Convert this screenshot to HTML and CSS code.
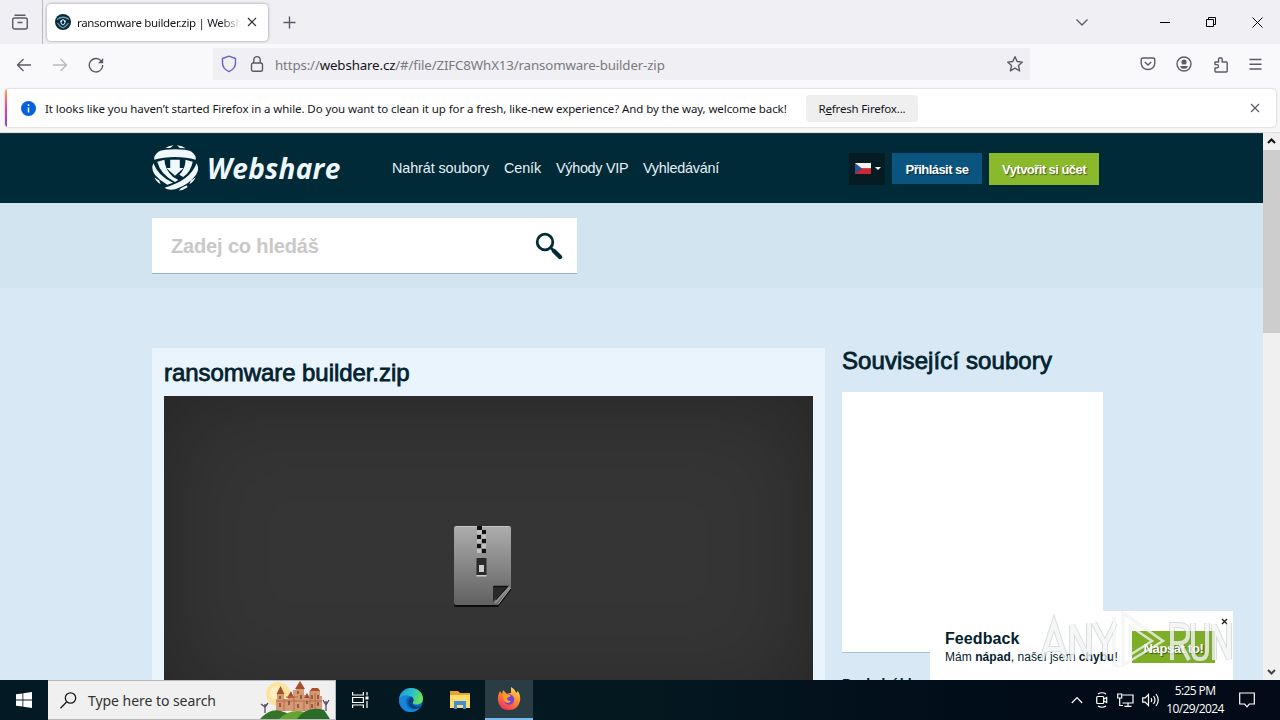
FILE: index.html
```html
<!DOCTYPE html>
<html lang="cs">
<head>
<meta charset="utf-8">
<title>ransomware builder.zip | Webshare</title>
<link rel="stylesheet" href="styles.css">
</head>
<body>
<div class="tabs">
  <div class="tabs-view"><svg width="18" height="18" viewBox="0 0 18 18" class="line"><rect x="1.7" y="5" width="14.6" height="11" rx="2"/><path d="M3.5 2.2h11M6.5 9.5h5"/></svg></div>
  <div class="tab">
    <svg class="favicon" width="16" height="16" viewBox="0 0 16 16"><circle cx="8" cy="8" r="8" fill="#0b2b3a"/><path d="M2 5.500Q8 1 14 5.500M2.500 9Q5 13 8.500 14M13.500 9Q12 12 8 14" fill="none" stroke="#6d9db5" stroke-width="1.300"/><path d="M8 5l3 2-1 3-2 1.500L6 10 5 7z" fill="#d5e9f3"/><path d="M7 6.500h2v2h1L8 10.500l-2-2h1z" fill="#0b2b3a"/></svg>
    <span class="tab-title">ransomware builder.zip | Webshare</span>
    <svg width="10" height="10" viewBox="0 0 10 10" class="line dark"><path d="M1 1l8 8M9 1l-8 8"/></svg>
  </div>
  <svg class="plus line" width="13" height="13" viewBox="0 0 13 13"><path d="M6.500.5v12M.5 6.500h12"/></svg>
  <div class="window-buttons">
    <svg class="line chevron" width="14" height="9" viewBox="0 0 14 9"><path d="M1.500 1.500L7 7l5.500-5.500"/></svg>
    <svg class="black" width="11" height="11" viewBox="0 0 11 11"><path d="M0 5.500h10"/></svg>
    <svg class="black" width="11" height="11" viewBox="0 0 11 11"><path d="M.5 2.500h7v7h-7zM2.500 2.500V.500h7v7h-2"/></svg>
    <svg class="black" width="11" height="11" viewBox="0 0 11 11"><path d="M.5.500l10 10M10.500.500l-10 10"/></svg>
  </div>
</div>
<div class="navbar">
  <div class="nav-buttons">
    <svg class="line" width="16" height="16" viewBox="0 0 16 16"><path d="M15 8H1.500M7.500 2l-6 6 6 6"/></svg>
    <svg class="line faded" width="16" height="16" viewBox="0 0 16 16"><path d="M1 8h13.500M8.500 2l6 6-6 6"/></svg>
    <svg class="line" width="16" height="16" viewBox="0 0 16 16"><path d="M13.300 4.100A6.700 6.700 0 1 0 14.700 8"/><path d="M15.200 1v5.200H10z" fill="#5b5b66" stroke="none"/></svg>
  </div>
  <div class="urlbar">
    <svg width="16" height="18" viewBox="0 0 16 18" class="line shield"><path d="M8 1.200l6.500 2.300v4.500c0 4-3 7-6.500 8.600C4.500 15 1.500 12 1.500 8V3.500z"/></svg>
    <svg width="14" height="18" viewBox="0 0 14 18" class="line"><rect x="1.500" y="8" width="11" height="8.200" rx="1.800"/><path d="M3.800 8V4.800a3.200 3.200 0 0 1 6.400 0V8"/></svg>
    <span class="url">https://<b>webshare.cz</b>/#/file/ZIFC8WhX13/ransomware-builder-zip</span>
    <svg class="line star" width="18" height="18" viewBox="0 0 18 18"><path d="M9 1.700l2.200 4.800 5.200.6-3.900 3.500 1.100 5.200L9 13.200l-4.600 2.600 1.100-5.200L1.600 7.100l5.200-.6z"/></svg>
  </div>
  <div class="nav-tools">
    <svg class="line" width="16" height="16" viewBox="0 0 16 16"><path d="M3 2h10a1.800 1.800 0 0 1 1.800 1.800v3.400a6.800 6.300 0 0 1-13.600 0V3.800A1.800 1.800 0 0 1 3 2zM4.800 6L8 9l3.200-3"/></svg>
    <svg class="line" width="16" height="16" viewBox="0 0 16 16"><circle cx="8" cy="8" r="7"/><circle cx="8" cy="6" r="2.600" class="solid"/><path d="M4.200 9.900h7.600c0 1.800-1.500 2.900-3.800 2.900s-3.800-1.100-3.800-2.900z" class="solid"/></svg>
    <svg class="line" width="16" height="17" viewBox="0 0 16 17"><path d="M2 6h3.600V3.600a1.800 1.800 0 0 1 3.600 0V6h4a1 1 0 0 1 1 1v8a1 1 0 0 1-1 1H3a1 1 0 0 1-1-1v-3h1.800a1.700 1.700 0 0 0 0-3.400H2z"/></svg>
    <svg class="line" width="13" height="13" viewBox="0 0 13 13"><path d="M.5 1.500h12M.5 6.200h12M.5 11h12"/></svg>
  </div>
</div>
<div class="notice-row">
  <div class="notice">
    <svg width="15" height="15" viewBox="0 0 15 15"><circle cx="7.500" cy="7.500" r="7.500" fill="#0561e0"/><path d="M7.500 3.300v1.800M7.500 6.500v5" stroke="#fff" stroke-width="1.500"/></svg>
    <span class="notice-text">It looks like you haven’t started Firefox in a while. Do you want to clean it up for a fresh, like-new experience? And by the way, welcome back!</span>
    <span class="refresh"><span class="refresh-text">R<u>e</u>fresh Firefox...</span></span>
    <svg class="line notice-close" width="10" height="10" viewBox="0 0 10 10"><path d="M1 1l8 8M9 1l-8 8"/></svg>
  </div>
</div>
<div class="viewport">
  <div class="page">
    <header class="site-header">
      <svg class="logo" width="46" height="46" viewBox="0 0 48 48">
        <path d="M14 3Q17 1 22.500.300L19 3zM26 .300Q32 1 35 3.500L29 3z"/>
        <path d="M2.500 15.500Q1.500 12 5 8.500Q8 5.500 14 5Q24 4 34 5Q40 5.500 43 8.500Q46.500 12 45.500 15.500Q36 12.500 24 12.500Q12 12.500 2.500 15.500z"/>
        <path d="M5.500 17.500L13 15.500Q13 25 22 33.500L27.500 36.500l-3.500 2Q9 31 5.500 17.500zM42.500 17.500L35 15.500Q35 25 28.500 31l4 2.500Q40.500 28 42.500 17.500z"/>
        <path d="M1.500 19Q-1.500 25 3 31Q8 37 16 41.500l6-2Q6 32 1.500 19zM46.500 19Q50 25 46 31Q39 41 25 46Q17 48 13 44.500Q40 37 46.500 19z"/>
        <path d="M2.500 34l5 3 1.500 4Q4 38 2.500 34zM45.500 34l-5 3-1.500 4Q44 38 45.500 34zM30 45l6.500-3 .5 2Q33 47 28 47.500z"/>
        <path d="M19 15.500h10v8.500h4L24 32l-9-8h4z"/></svg>
      <span class="brand">Webshare</span>
      <nav class="menu"><span class="m1">Nahrát soubory</span><span class="m2">Ceník</span><span class="m3">Výhody VIP</span><span class="m4">Vyhledávání</span></nav>
      <div class="account">
        <span class="lang"><svg width="16" height="11" viewBox="0 0 16 11"><path fill="#f4f4f4" d="M0 0h16v5.500H0z"/><path fill="#d22534" d="M0 5.500h16V11H0z"/><path fill="#27568f" d="M0 0l7 5.500L0 11z"/></svg><svg width="6" height="3" viewBox="0 0 6 3"><path fill="#fff" d="M0 0h6L3 3z"/></svg></span>
        <span class="button login">Přihlásit se</span>
        <span class="button signup">Vytvořit si účet</span>
      </div>
    </header>
    <div class="search-band">
      <div class="search"><span class="placeholder">Zadej co hledáš</span>
        <svg width="28" height="28" viewBox="0 0 28 28"><circle cx="10" cy="10" r="7.800" fill="none" stroke="#022b37" stroke-width="2.800"/><path d="M15.500 15.500l3 3" stroke="#022b37" stroke-width="2.600"/><path d="M19 19l6 6" stroke="#022b37" stroke-width="4.400" stroke-linecap="round"/></svg>
      </div>
    </div>
    <div class="columns">
      <main class="file">
        <h1>ransomware builder.zip</h1>
        <div class="preview">
          <svg width="60" height="84" viewBox="0 0 60 84"><defs><linearGradient id="sheet" x1="0" y1="0" x2="0" y2="1"><stop offset="0" stop-color="#adadad"/><stop offset="1" stop-color="#606060"/></linearGradient></defs>
            <path d="M3 3h53q2 0 2 2v60L45 82H3q-2 0-2-2V5q0-2 2-2z" fill="#0b0b0b"/>
            <path d="M3 1h53q2 0 2 2v60L45 80H3q-2 0-2-2V3q0-2 2-2z" fill="url(#sheet)"/>
            <path d="M3 1.500h53" stroke="#c8c8c8"/><path d="M57.500 63L45 79.500" stroke="#aaa"/>
            <path d="M24 1h5v4h-5zM29 5h4v4h-4zM24 10h4v4h-4zM29 14h4v4h-4zM24 19h4v4h-4zM29 24h4v4h-4z" fill="#111"/>
            <path d="M24 5h5v4h-5zM29 9.500h4v4h-4zM24 14h4v4h-4zM29 19h4v4h-4zM24 24h4v4h-4z" fill="#c0c0c0"/>
            <path d="M23.500 33h10v17h-10z" fill="#2a2a2a"/><path d="M26 40h5v7h-5zM23.500 50h10v1.500h-10z" fill="#ccc"/>
            <path d="M40 77V61h14z" fill="#292929"/><path d="M40.500 61.500h14L43 75" fill="none" stroke="#111" stroke-width="1.500"/><path d="M56.500 62L42 78" stroke="#8e8e8e" stroke-width="2"/></svg>
        </div>
      </main>
      <aside class="related"><h2>Související soubory</h2><div class="related-box"></div><h3>Poslední hl</h3></aside>
    </div>
    <div class="feedback">
      <div><div class="feedback-title">Feedback</div><div class="feedback-text">Mám <b>nápad</b>, našel jsem <b>chybu</b>!</div></div>
      <span class="button write">Napsat to!</span>
      <svg class="feedback-close" width="7" height="7" viewBox="0 0 7 7"><path d="M1 1l5 5M6 1L1 6" stroke="#222" stroke-width="1.400"/></svg>
    </div>
    <svg class="watermark" width="198" height="66" viewBox="0 0 198 66">
      <defs><g id="mark"><path d="M5 52L17 15l12 37M9 41h16M35 52V17l17 34V15M57 15l11 21v16M68 36l10-21M135 52V17h7q9 0 9 9t-9 9h-7m8 0l9 17M156 15v28q0 8 7 8t7-8V15M177 52V17l15 34V15"/><path d="M77 9v47l5 3M86 5v52l40-24zM93 18v29l22-14z" stroke-width="2.500"/></g></defs>
      <use href="#mark" fill="none" stroke="#7e868b" stroke-opacity=".28" stroke-width="6"/>
      <use href="#mark" fill="none" stroke="#fff" stroke-opacity=".72" stroke-width="4"/>
    </svg>
  </div>
  <div class="scrollbar">
    <svg width="9" height="6" viewBox="0 0 9 6"><path d="M1 5l3.500-3.500L8 5" fill="none" stroke="#111" stroke-width="2"/></svg>
    <div class="thumb"></div>
    <svg class="down" width="9" height="6" viewBox="0 0 9 6"><path d="M1 1l3.500 3.500L8 1" fill="none" stroke="#444" stroke-width="2"/></svg>
  </div>
</div>
<div class="taskbar">
  <div class="start"><svg width="16" height="16" viewBox="0 0 16 16" fill="#fff"><path d="M0 2.300l6.500-.9v6.100H0zM7.300 1.300L16 0v7.500H7.300zM0 8.400h6.500v6.200L0 13.700zM7.300 8.400H16V16l-8.700-1.300z"/></svg></div>
  <div class="win-search">
    <svg width="17" height="17" viewBox="0 0 17 17" fill="none" stroke="#1b1b1b" stroke-width="1.300"><circle cx="10.500" cy="6" r="5.200"/><path d="M6.800 9.800L.5 16.300"/></svg>
    <span class="win-search-text">Type here to search</span>
    <svg class="castle" width="74" height="38" viewBox="0 0 74 38">
      <circle cx="18" cy="13" r="12" fill="#fbe3a0"/><circle cx="17" cy="12" r="7" fill="#fff0bd"/>
      <path d="M16 30V18h1v-5h7v5h4v-3h5V9h3V7h8v7h3v3h3V9h10v6h2v15z" fill="#d79a77"/>
      <path d="M16.500 13l4-8 4 8zM35 8l5-8 5 8zM50 10l2-3h6l2 3zM27 17l4-7 3 7zM44 17l3-5 3 5z" fill="#a94d2b"/>
      <path d="M16 20h46M26 16h12M44 20v10M34 15v15M24 18v12M50 10v20M55 12v18" stroke="#b76a49"/>
      <path d="M20 15v3M20 22v4M29 20v4M38 10v3M41 14v4M38 23v4M47 20v3M52 14v4M52 23v4M58 14v4M58 21v4" stroke="#713a2b" stroke-width="1.300"/>
      <path d="M0 38Q10 27 21 30t16 8z" fill="#34752a"/><path d="M19 38q11-11 26-7t22 7z" fill="#65a330"/><path d="M37 38q10-14 27-9l6 9z" fill="#2b6c28"/><path d="M5 32V23M1 23l4 3 3-4M66 30V20M63 19l3 5 3-5" stroke="#574767" fill="none" stroke-width="1.300"/></svg>
  </div>
  <div class="task"><svg width="18" height="16" viewBox="0 0 18 16" fill="none" stroke="#fff" stroke-width="1.200"><path d="M.6 0v3h10.800V0M.6 16v-3h10.800v3M.6 5.500h10.800v5H.6zM15 0v3.500M15 9v7"/><path d="M13.500 4.500h3v3h-3z" fill="#fff" stroke="none"/></svg></div>
  <div class="task edge"><svg width="24" height="24" viewBox="0 0 24 24"><defs><linearGradient id="eg" x1="0" y1="0" x2="1" y2=".3"><stop offset="0" stop-color="#1c8fd8"/><stop offset=".6" stop-color="#2bc3c6"/><stop offset="1" stop-color="#67e05c"/></linearGradient></defs><circle cx="12" cy="12" r="12" fill="#0c63b5"/><path d="M0 11C1 4 6 0 12 0c7 0 12 5 12 10.500 0 4-3 6-6.500 6-3 0-4.500-1-3.500-2.500 2-3-.5-6-4-6-5 0-8.500 2-10 3z" fill="url(#eg)"/><path d="M0 11c3-4 8-4.500 11-2.500-4 1-5 5-3 9 2 4 7 5 13 2-4 5-10 5-13 4C3 22-.5 17 0 11z" fill="#1685d8"/><path d="M14 14c1-2 0-4-1-5-5 2-5 8 0 11 3 1.500 7 .5 9.500-1.500C18 20 12 18 14 14z" fill="#07417e"/></svg></div>
  <div class="task explorer"><svg width="22" height="19" viewBox="0 0 22 19"><path d="M1 0h8l2 2h10v15H1z" fill="#e8a32a"/><path d="M1 4h20v13H1z" fill="#fddb6d"/><path d="M5 18v-8h12v8h-3v-4H8v4z" fill="#3b91d7"/></svg></div>
  <div class="task active"><svg width="24" height="24" viewBox="0 0 24 24"><defs><linearGradient id="ff" x1=".8" y1="0" x2=".2" y2="1"><stop offset="0" stop-color="#ffe04a"/><stop offset=".5" stop-color="#ff822e"/><stop offset="1" stop-color="#f22a65"/></linearGradient></defs><path d="M3 4l2 3 1-4 4 4q2-1 4-1V0q4 2 5 6l2-2q3 5 2 10-2 9-11 9Q2 23 .8 13 .5 8 3 4z" fill="url(#ff)"/><circle cx="12" cy="12.500" r="5.200" fill="#7542d8"/><path d="M5 8q5-2 9 1l-4 2q0 3 4 3-3 4-7 0z" fill="#ff9a2d"/></svg></div>
  <div class="tray">
    <svg width="12" height="8" viewBox="0 0 12 8"><path d="M.8 7L6 1.500 11.200 7"/></svg>
    <svg width="12" height="16" viewBox="0 0 12 16"><rect x=".7" y="4.500" width="7" height="7" rx="1"/><path d="M7.700 7l3-1.500v5l-3-1.500M2 2q4-2.500 8 0M2 14q4 2.500 8 0"/></svg>
    <svg width="17" height="14" viewBox="0 0 17 14"><path d="M5.500 2H16v8H5.500M.7 1h4v4h-4zM2.700 5v7.500H6M11 10v3M7.500 13.300h7"/></svg>
    <svg width="17" height="14" viewBox="0 0 17 14"><path d="M.7 4.800h2.500L6.500 1.500v11L3.200 9.200H.7zM9 5q1.500 2 0 4M11.500 3q3 4 0 8M14 1q4.500 6 0 12"/></svg>
    <div class="clock"><span class="time">5:25 PM</span><span class="date">10/29/2024</span></div>
    <svg class="action" width="16" height="16" viewBox="0 0 16 16"><path d="M.7 1h14.600v11h-5L8 14.800 5.700 12h-5z"/></svg>
  </div>
</div>
</body>
</html>
```
FILE: styles.css
```css
* { box-sizing: border-box; }
body { margin: 0; width: 1280px; height: 720px; overflow: hidden; display: flex; flex-direction: column; font-family: "Noto Sans", "Open Sans", sans-serif; font-size: 11.5px; color: #15141a; background: #f9f9fb; }
svg { display: block; flex: none; }
span { white-space: nowrap; }
.line { fill: none; stroke: #5b5b66; stroke-width: 1.4; stroke-linejoin: round; }
.line .solid { fill: #5b5b66; stroke: none; }
.dark { stroke: #333; stroke-width: 1.2; }
.faded { opacity: .4; }
.black { fill: none; stroke: #000; stroke-width: 1; }

.tabs { height: 44px; flex: none; display: flex; align-items: center; background: #f0eff4; }
.tabs-view { width: 43px; height: 44px; padding: 13px 0 0 11px; border-right: 1px solid #b9b9c0; }
.tab { width: 221px; height: 37px; margin-left: 4px; padding: 0 11px 0 8px; display: flex; align-items: center; background: #fff; border-radius: 4px; box-shadow: 0 0 3px rgba(0,0,0,.42); }
.tab-title { width: 164px; margin-left: 6px; margin-right: 6px; overflow: hidden; letter-spacing: -.32px; mask-image: linear-gradient(to right, #000 88%, transparent); }
.plus { margin-left: 15px; }
.window-buttons { margin-left: auto; margin-right: 17px; display: flex; align-items: center; gap: 35px; }
.chevron { margin-right: 36px; }

.navbar { height: 44px; flex: none; display: flex; align-items: flex-start; padding-top: 4px; background: #f9f9fb; }
.nav-buttons { width: 213px; height: 33px; padding-left: 16px; display: flex; align-items: center; gap: 20px; }
.urlbar { width: 817px; height: 32px; padding: 0 6px 0 8px; display: flex; align-items: center; background: #f0eff4; }
.shield { stroke: #6962c6; margin-right: 13px; }
.url { margin-left: 11px; padding-top: 1px; font-size: 13.3px; letter-spacing: -.14px; color: #7a7980; }
.url b { font-weight: 400; color: #15141a; }
.star { margin-left: auto; }
.nav-tools { height: 32px; margin-left: 110px; display: flex; align-items: center; gap: 20.3px; }

.notice-row { height: 45px; flex: none; padding: 1px 4px 6px 5px; background: #f7f7f7; border-bottom: 1px solid #d7e1e5; }
.notice { height: 38px; display: flex; align-items: center; padding: 0 16px; background: linear-gradient(#ffa24c, #e0479a 50%, #8646c8) left / 2px 100% no-repeat, #fff; border-radius: 4px; box-shadow: 0 0 2px rgba(0,0,0,.28); }
.notice-text { margin-left: 9px; width: 743px; letter-spacing: -.095px; }
.refresh { margin-left: 18px; width: 112px; height: 27px; display: flex; align-items: center; justify-content: center; background: #efeff0; border-radius: 4px; letter-spacing: -.18px; }
.notice-close { margin-left: auto; stroke-width: 1.2; }

.viewport { height: 547px; flex: none; display: flex; overflow: hidden; font-family: "Liberation Sans", Arial, sans-serif; }
.page { position: relative; width: 1263px; height: 547px; overflow: hidden; background: #d8e8f5; color: #02222e; }
.site-header { height: 70px; padding-left: 152px; display: flex; align-items: center; background: #012a38; border-top: 1px solid #1c3540; }
.logo { fill: #f0f8fd; margin-top: -2px; }
.brand { margin-left: 9px; width: 135px; padding-bottom: 1px; font: italic 700 28px/34px "Open Sans", "Noto Sans", sans-serif; letter-spacing: .25px; color: #eef7fc; }
.menu { margin-left: 50px; padding-bottom: 2px; display: flex; gap: 15px; font-size: 14.4px; letter-spacing: -.1px; color: #e3f1f7; }
.m1 { width: 97px; } .m2 { width: 37px; } .m3 { width: 72px; letter-spacing: -.3px; } .m4 { width: 77px; letter-spacing: -.25px; }
.account { margin-left: 129px; display: flex; gap: 7px; }
.lang { width: 36px; height: 32px; padding-left: 2px; display: flex; align-items: center; justify-content: center; gap: 4px; background: #041c22; }
.button { height: 32px; padding-top: 2px; display: flex; align-items: center; justify-content: center; font-size: 13px; font-weight: 700; letter-spacing: -.55px; color: #fff; text-shadow: 1px 1px 1px rgba(0,0,0,.5); }
.login { width: 90px; height: 31px; background: #0a5480; }
.signup { width: 110px; background: #8bb92c; }
.search-band { height: 85px; padding: 15px 0 0 152px; background: #d3e4f1; }
.search { width: 425px; height: 56px; padding: 1px 14.5px 0 19px; display: flex; align-items: center; justify-content: space-between; background: #fff; border-bottom: 1px solid #9bb1c5; }
.placeholder { font-size: 20px; font-weight: 700; letter-spacing: -.15px; color: #c8c8c8; }
.columns { display: flex; align-items: flex-start; padding: 60px 0 0 152px; }
.file { width: 673px; height: 360px; padding: 0 12px; background: #eaf4fd; }
h1, h2 { margin: 0; font-size: 24px; font-weight: 400; -webkit-text-stroke: .8px #02222e; white-space: nowrap; }
h1 { height: 48px; line-height: 50px; letter-spacing: -.06px; }
.preview { height: 312px; padding: 129px 0 0 289px; background: #353535; box-shadow: inset 0 0 100px rgba(0,0,0,.3); }
.related { width: 261px; margin-left: 17px; }
h2 { height: 44px; line-height: 26px; letter-spacing: .1px; }
.related-box { height: 261px; background: #fff; border-bottom: 1px solid #a9c1d3; }
h3 { margin: 22px 0 0; font-size: 14px; letter-spacing: -.5px; line-height: 18px; white-space: nowrap; }
.feedback { position: absolute; left: 930px; top: 478px; width: 303px; height: 80px; padding: 18px 18px 0 15px; display: flex; justify-content: space-between; align-items: flex-start; background: #fff; }
.feedback-title { font-size: 16px; line-height: 19px; font-weight: 700; letter-spacing: .1px; }
.feedback-text { font-size: 12px; line-height: 18px; letter-spacing: .05px; white-space: nowrap; }
.write { width: 83px; margin-top: 2px; background: #7eae25; letter-spacing: -.35px; }
.feedback-close { position: absolute; right: 5px; top: 7px; }
.watermark { position: absolute; left: 1037px; top: 475px; }
.scrollbar { width: 17px; padding-top: 5px; display: flex; flex-direction: column; align-items: center; background: #f0f0f0; }
.thumb { width: 17px; height: 183px; margin-top: 6px; background: #cdcdcd; }
.down { margin-top: auto; margin-bottom: 5px; }

.taskbar { height: 40px; flex: none; display: flex; align-items: center; color: #fff; background: linear-gradient(to right, #031923 0, #041820 50%, #020d1a 75%, #030b18 100%); }
.start { width: 48px; padding-left: 16px; }
.win-search { width: 288px; height: 40px; padding: 0 1px 0 12px; display: flex; align-items: center; background: #f0f0f0; border: solid #b6babd; border-width: 1px 1px 1px 0; color: #333; }
.win-search-text { width: 129px; margin-left: 11px; font-size: 14px; letter-spacing: -.05px; }
.castle { margin-left: auto; }
.task { width: 49px; height: 40px; display: flex; align-items: center; justify-content: center; }
.edge { width: 52px; }
.explorer { width: 46px; }
.task.active { width: 48px; margin-left: 2px; background: #2a3d45; border-bottom: 2px solid #76b9ed; }
.tray { margin-left: auto; padding-right: 25px; display: flex; align-items: center; fill: none; stroke: #fff; stroke-width: 1.2; gap: 8px; }
.tray > svg:first-child { margin-right: 5px; }
.tray > svg:nth-child(2) { margin-right: 1px; }
.clock { width: 58px; margin-left: -1px; display: flex; flex-direction: column; align-items: center; stroke: none; font: 12px/18px "Open Sans", "Noto Sans", sans-serif; letter-spacing: -.6px; }
.action { margin-left: 7px; }
```
